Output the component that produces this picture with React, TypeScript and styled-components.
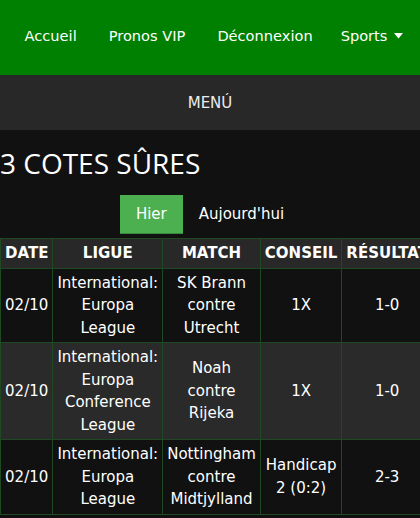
import React from "react";
import styled, { createGlobalStyle } from "styled-components";

const Global = createGlobalStyle`
  html, body { margin: 0; padding: 0; background: #111111; }
  body { font-family: "DejaVu Sans", Verdana, sans-serif; color: #ffffff; }
  * { box-sizing: border-box; }
`;

const Page = styled.div`
  width: 420px;
  min-height: 518px;
  background: #111111;
  overflow: hidden;
`;

const Nav = styled.nav`
  height: 75px;
  background: #008000;
  display: flex;
  align-items: center;
  justify-content: center;
  padding: 0 0 4px 4px;
`;

const NavLink = styled.a<{ $tight?: boolean }>`
  display: flex;
  align-items: center;
  gap: 7px;
  padding: 0 ${(p) => (p.$tight ? "12px" : "16px")};
  color: #ffffff;
  font-size: 14.6px;
  text-decoration: none;
  white-space: nowrap;
`;

const MenuBar = styled.div`
  height: 55px;
  background: #282828;
  display: flex;
  align-items: center;
  justify-content: center;
  color: #ececec;
  font-size: 15px;
`;

const Title = styled.h1`
  margin: 14px 0 13px 0;
  font-family: "Open Sans", sans-serif;
  font-weight: 400;
  font-size: 28px;
  line-height: 38px;
  color: #ffffff;
`;

const Tabs = styled.div`
  display: flex;
  justify-content: center;
  margin-bottom: 4px;
`;

const Tab = styled.button<{ $active?: boolean }>`
  height: 39px;
  padding: 0 16px;
  border: none;
  border-bottom: 1px solid ${(p) => (p.$active ? "#3a8c3d" : "transparent")};
  background: ${(p) => (p.$active ? "#4caf50" : "transparent")};
  color: #ffffff;
  font-family: "DejaVu Sans", Verdana, sans-serif;
  font-size: 15px;
  cursor: pointer;
`;

const Scroller = styled.div`
  width: 420px;
  overflow-x: auto;
  overflow-y: hidden;
  &::-webkit-scrollbar { height: 4px; }
  &::-webkit-scrollbar-track { background: transparent; }
  &::-webkit-scrollbar-thumb { background: #555555; }
`;

const Table = styled.table`
  width: 100%;
  border-collapse: collapse;
  font-size: 15px;
  line-height: 22.5px;
`;

const Th = styled.th`
  background: #282828;
  border: 1px solid #1f4a21;
  padding: 3px 4px;
  font-weight: 700;
  text-align: center;
  color: #ffffff;
`;

const Row = styled.tr<{ $alt?: boolean }>`
  background: ${(p) => (p.$alt ? "#2a2a2a" : "#111111")};
`;

const Td = styled.td`
  border: 1px solid #1f4a21;
  padding: 3px 4px;
  text-align: center;
  vertical-align: middle;
  color: #ffffff;
`;

const Caret = () => (
  <svg width="9" height="6" viewBox="0 0 9 6">
    <path d="M0 0 L9 0 L4.5 5.5 Z" fill="#ffffff" />
  </svg>
);

const rows = [
  { date: "02/10", ligue: "International: Europa League", match: "SK Brann contre Utrecht", conseil: "1X", res: "1-0" },
  { date: "02/10", ligue: "International: Europa Conference League", match: "Noah contre Rijeka", conseil: "1X", res: "1-0" },
  { date: "02/10", ligue: "International: Europa League", match: "Nottingham contre Midtjylland", conseil: "Handicap 2 (0:2)", res: "2-3" },
];

export default function App() {
  return (
    <Page>
      <Global />
      <Nav>
        <NavLink>Accueil</NavLink>
        <NavLink>Pronos VIP</NavLink>
        <NavLink>Déconnexion</NavLink>
        <NavLink $tight>
          Sports <Caret />
        </NavLink>
      </Nav>
      <MenuBar>MENÚ</MenuBar>
      <Title>3 COTES SÛRES</Title>
      <Tabs>
        <Tab $active>Hier</Tab>
        <Tab>Aujourd'hui</Tab>
      </Tabs>
      <Scroller>
        <Table>
          <thead>
            <tr>
              <Th>DATE</Th>
              <Th>LIGUE</Th>
              <Th>MATCH</Th>
              <Th>CONSEIL</Th>
              <Th>RÉSULTAT</Th>
            </tr>
          </thead>
          <tbody>
            {rows.map((r, i) => (
              <Row key={i} $alt={i % 2 === 1}>
                <Td>{r.date}</Td>
                <Td>{r.ligue}</Td>
                <Td>{r.match}</Td>
                <Td>{r.conseil}</Td>
                <Td>{r.res}</Td>
              </Row>
            ))}
          </tbody>
        </Table>
      </Scroller>
    </Page>
  );
}
